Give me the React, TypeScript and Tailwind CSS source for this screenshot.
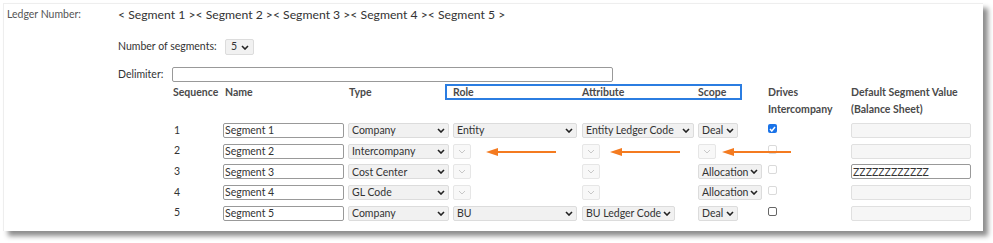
import React from "react";

const font = { fontFamily: "Lato, 'Noto Sans', sans-serif" };

function Chevron({ light }: { light?: boolean }) {
  return (
    <svg width="8" height="5" viewBox="0 0 8 5" className="shrink-0">
      <polyline
        points="1,1 4,4 7,1"
        fill="none"
        stroke={light ? "#c8c8c8" : "#222"}
        strokeWidth={light ? 1 : 1.6}
      />
    </svg>
  );
}

function Select({ value, width, disabled }: { value?: string; width: string; disabled?: boolean }) {
  if (disabled) {
    return (
      <div className={`${width} h-[15px] flex items-center justify-center rounded-[2px] border border-[#e6e6e6] bg-[#f8f8f8]`}>
        <Chevron light />
      </div>
    );
  }
  return (
    <div className={`${width} h-[15px] flex items-center justify-between pl-[3px] pr-[3px] rounded-[2px] border border-[#dcdcdc] bg-[#f1f1f1] text-[10.5px] leading-none text-[#333] whitespace-nowrap`}>
      <span>{value}</span>
      <Chevron />
    </div>
  );
}

function TextBox({ value, disabled }: { value?: string; disabled?: boolean }) {
  return (
    <div
      className={`h-[15px] flex items-center px-[1px] rounded-[2px] border text-[10.5px] leading-none text-[#333] ${
        disabled ? "border-[#e0e0e0] bg-[#f6f6f6]" : "border-[#999] bg-white"
      }`}
    >
      {value}
    </div>
  );
}

function Check({ checked, disabled }: { checked?: boolean; disabled?: boolean }) {
  if (checked) {
    return (
      <div className="mt-[1px] w-[9px] h-[9px] rounded-[2px] bg-[#1a73e8] flex items-center justify-center">
        <svg width="7" height="6" viewBox="0 0 7 6">
          <polyline points="1,3 2.8,5 6,1" fill="none" stroke="white" strokeWidth="1.5" />
        </svg>
      </div>
    );
  }
  return (
    <div
      className={`mt-[1px] w-[9px] h-[9px] rounded-[2px] border bg-white ${
        disabled ? "border-[#dadada]" : "border-[#666]"
      }`}
    />
  );
}

function Arrow({ left, width }: { left: string; width: number }) {
  return (
    <svg
      width={width}
      height="10"
      viewBox={`0 0 ${width} 10`}
      className={`absolute top-[143px] ${left}`}
    >
      <polygon points={`0,5 12,1 12,9`} fill="#f47b20" />
      <line x1="10" y1="5" x2={width} y2="5" stroke="#f47b20" strokeWidth="2" />
    </svg>
  );
}

const rows = [
  { n: 1, name: "Segment 1", type: "Company", role: "Entity", attr: "Entity Ledger Code", attrW: "w-[112px]", scope: "Deal", scopeW: "w-[40px]", checked: true, def: "" },
  { n: 2, name: "Segment 2", type: "Intercompany", role: "", attr: "", attrW: "", scope: "", scopeW: "", disabledCheck: true, def: "" },
  { n: 3, name: "Segment 3", type: "Cost Center", role: "", attr: "", attrW: "", scope: "Allocation", scopeW: "w-[64px]", disabledCheck: true, def: "ZZZZZZZZZZZZ", defEnabled: true },
  { n: 4, name: "Segment 4", type: "GL Code", role: "", attr: "", attrW: "", scope: "Allocation", scopeW: "w-[64px]", disabledCheck: true, def: "" },
  { n: 5, name: "Segment 5", type: "Company", role: "BU", attr: "BU Ledger Code", attrW: "w-[93px]", scope: "Deal", scopeW: "w-[40px]", def: "" },
];

export default function App() {
  return (
    <div className="w-[993px] h-[243px] bg-white overflow-hidden" style={font}>
      <div className="relative ml-[3px] mt-[3px] w-[980px] h-[228px] bg-white border-l border-t border-[#eeeeee] shadow-[5px_5px_5px_rgba(0,0,0,0.45)] pl-[3px]">
        <div className="flex items-center h-[22px] whitespace-nowrap">
          <div className="w-[111px] text-[10.5px] text-[#555]">Ledger Number:</div>
          <div className="text-[12.2px] text-[#333]">
            &lt; Segment 1 &gt;&lt; Segment 2 &gt;&lt; Segment 3 &gt;&lt; Segment 4 &gt;&lt; Segment 5 &gt;
          </div>
        </div>

        <div className="ml-[111px]">
          <div className="mt-[13px] flex items-center h-[16px] text-[10.5px] text-[#333] whitespace-nowrap">
            <span className="w-[107px]">Number of segments:</span>
            <div className="w-[29px] h-[16px] flex items-center justify-between pl-[5px] pr-[4px] rounded-[2px] border border-[#dcdcdc] bg-[#f1f1f1]">
              <span>5</span>
              <Chevron />
            </div>
          </div>

          <div className="mt-[12px] flex items-center h-[15px] text-[10.5px] text-[#333]">
            <span className="w-[54px]">Delimiter:</span>
            <div className="w-[441px] h-[15px] rounded-[2px] border border-[#999] bg-white" />
          </div>

          <div className="ml-[55px] mt-[2px] grid grid-cols-[50px_125px_105px_129px_116px_70px_83px_125px] text-[10.5px] font-bold text-[#4a4a4a] leading-[17px] whitespace-nowrap">
            <div>Sequence</div>
            <div className="pl-[2px]">Name</div>
            <div className="pl-[1px]">Type</div>
            <div>Role</div>
            <div>Attribute</div>
            <div>Scope</div>
            <div>Drives<br />Intercompany</div>
            <div>Default Segment Value<br />(Balance Sheet)</div>
          </div>

          <div className="ml-[55px] mt-[5px] grid grid-cols-[50px_125px_105px_129px_116px_70px_83px_125px] gap-y-[5.7px] text-[10.5px] text-[#333]">
            {rows.map((r) => (
              <React.Fragment key={r.n}>
                <div className="h-[15px] flex items-center pl-[1px]">{r.n}</div>
                <div className="w-[121px]"><TextBox value={r.name} /></div>
                <div><Select value={r.type} width="w-[101px]" /></div>
                <div>{r.role ? <Select value={r.role} width="w-[124px]" /> : <Select width="w-[18px]" disabled />}</div>
                <div>{r.attr ? <Select value={r.attr} width={r.attrW} /> : <Select width="w-[18px]" disabled />}</div>
                <div>{r.scope ? <Select value={r.scope} width={r.scopeW} /> : <Select width="w-[18px]" disabled />}</div>
                <div className="h-[15px]"><Check checked={r.checked} disabled={r.disabledCheck} /></div>
                <div className="w-[120px]"><TextBox value={r.def} disabled={!r.defEnabled} /></div>
              </React.Fragment>
            ))}
          </div>
        </div>

        <div className="absolute left-[441px] top-[80px] w-[297px] h-[16px] border-2 border-[#2b7de1] pointer-events-none" />
        <Arrow left="left-[482px]" width={70} />
        <Arrow left="left-[606px]" width={70} />
        <Arrow left="left-[718px]" width={69} />
      </div>
    </div>
  );
}
